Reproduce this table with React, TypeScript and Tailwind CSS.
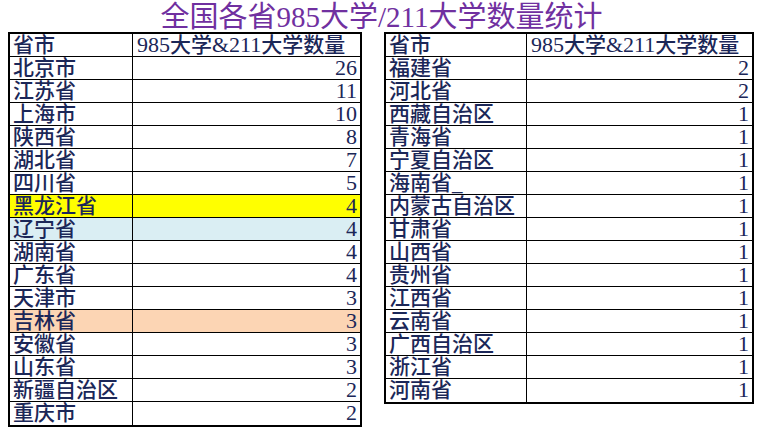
type Row = { name: string; count: number; bg?: string };

const leftRows: Row[] = [
  { name: "北京市", count: 26 },
  { name: "江苏省", count: 11 },
  { name: "上海市", count: 10 },
  { name: "陕西省", count: 8 },
  { name: "湖北省", count: 7 },
  { name: "四川省", count: 5 },
  { name: "黑龙江省", count: 4, bg: "bg-[#ffff00]" },
  { name: "辽宁省", count: 4, bg: "bg-[#daeef3]" },
  { name: "湖南省", count: 4 },
  { name: "广东省", count: 4 },
  { name: "天津市", count: 3 },
  { name: "吉林省", count: 3, bg: "bg-[#fcd5b4]" },
  { name: "安徽省", count: 3 },
  { name: "山东省", count: 3 },
  { name: "新疆自治区", count: 2 },
  { name: "重庆市", count: 2 },
];

const rightRows: Row[] = [
  { name: "福建省", count: 2 },
  { name: "河北省", count: 2 },
  { name: "西藏自治区", count: 1 },
  { name: "青海省", count: 1 },
  { name: "宁夏自治区", count: 1 },
  { name: "海南省_", count: 1 },
  { name: "内蒙古自治区", count: 1 },
  { name: "甘肃省", count: 1 },
  { name: "山西省", count: 1 },
  { name: "贵州省", count: 1 },
  { name: "江西省", count: 1 },
  { name: "云南省", count: 1 },
  { name: "广西自治区", count: 1 },
  { name: "浙江省", count: 1 },
  { name: "河南省", count: 1 },
];

function CountTable({ rows, width, colWidth }: { rows: Row[]; width: string; colWidth: string }) {
  return (
    <div className={`${width} border-2 border-black`}>
      <div className="flex h-[23px] border-b border-black">
        <div className={`${colWidth} border-r border-black pl-[3px] leading-[22px]`}>省市</div>
        <div className="flex-1 pl-[4px] leading-[22px] whitespace-nowrap">
          <span className="text-[22px]">985</span>大学<span className="text-[22px]">&amp;211</span>大学数量
        </div>
      </div>
      {rows.map((r, i) => (
        <div
          key={r.name}
          className={`flex h-[23px] ${i < rows.length - 1 ? "border-b" : ""} border-black ${r.bg ?? ""}`}
        >
          <div className={`${colWidth} border-r border-black pl-[3px] leading-[22px] whitespace-nowrap`}>{r.name}</div>
          <div className="flex-1 pr-[3px] text-right text-[22px] leading-[22px]">{r.count}</div>
        </div>
      ))}
    </div>
  );
}

export default function App() {
  return (
    <div
      className="w-[761px] h-[430px] bg-white overflow-hidden text-[#1b2758] text-[21px] font-medium"
      style={{ fontFamily: '"Liberation Serif", "Noto Sans CJK SC", serif' }}
    >
      <h1 className="h-[32px] text-center text-[29px] font-normal leading-[34px] text-[#7030a0] pl-[2px]">
        全国各省985大学/211大学数量统计
      </h1>
      <div className="flex items-start gap-[22px] pl-[8px]">
        <CountTable rows={leftRows} width="w-[354px]" colWidth="w-[123px]" />
        <CountTable rows={rightRows} width="w-[370px]" colWidth="w-[141px]" />
      </div>
    </div>
  );
}
